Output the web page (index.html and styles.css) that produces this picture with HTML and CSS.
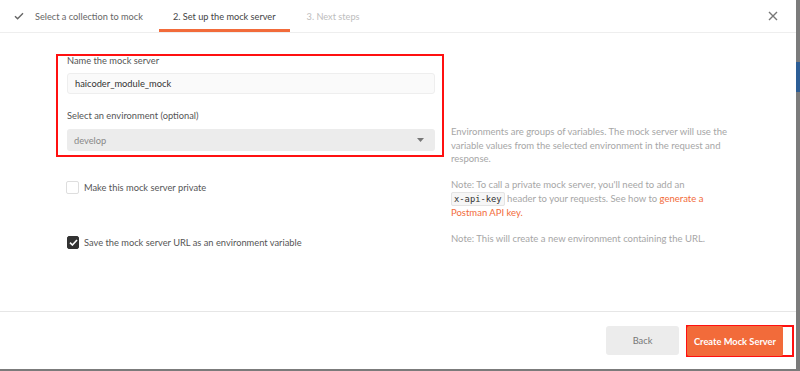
FILE: index.html
```html
<!DOCTYPE html>
<html>
<head>
<meta charset="utf-8">
<link rel="stylesheet" href="styles.css">
</head>
<body>
<div class="screen">
  <div class="modal">
    <header class="tabs">
      <div class="tab tab-done">
        <svg class="tick" width="10" height="8" viewBox="0 0 10 8"><polyline points="1,4.2 3.6,6.8 9,1.2" fill="none" stroke="#666" stroke-width="1.4"/></svg>
        <span>Select a collection to mock</span>
      </div>
      <div class="tab tab-active">2. Set up the mock server</div>
      <div class="tab tab-next">3. Next steps</div>
      <div class="spacer"></div>
      <button class="close" aria-label="Close">
        <svg width="10" height="10" viewBox="0 0 10 10"><path d="M1 1L9 9M9 1L1 9" stroke="#777" stroke-width="1.4" fill="none"/></svg>
      </button>
    </header>
    <main class="content">
      <div class="highlight">
        <label class="label">Name the mock server</label>
        <div class="input">haicoder_module_mock</div>
        <label class="label label-env">Select an environment (optional)</label>
        <div class="select">
          <span>develop</span>
          <svg width="7" height="4" viewBox="0 0 7 4"><path d="M0 0H7L3.5 4Z" fill="#777"/></svg>
        </div>
      </div>
      <p class="help help-env">Environments are groups of variables. The mock server will use the variable values from the selected environment in the request and response.</p>

      <div class="check-row">
        <span class="box"></span>
        <span>Make this mock server private</span>
      </div>
      <p class="help help-private">Note: To call a private mock server, you'll need to add an <code class="code">x-api-key</code> header to your requests. See how to <a class="link">generate a Postman API key.</a></p>

      <div class="check-row check-row-save">
        <span class="box box-on">
          <svg width="9" height="7" viewBox="0 0 9 7"><polyline points="1,3.6 3.4,6 8,1" fill="none" stroke="#fff" stroke-width="1.6"/></svg>
        </span>
        <span>Save the mock server URL as an environment variable</span>
      </div>
      <p class="help help-save">Note: This will create a new environment containing the URL.</p>
    </main>
    <footer class="footer">
      <button class="btn btn-back">Back</button>
      <div class="mark">
        <button class="btn btn-create">Create Mock Server</button>
      </div>
    </footer>
  </div>
  <div class="edge">
    <div class="edge-thumb"></div>
  </div>
</div>
</body>
</html>
```
FILE: styles.css
```css
* { box-sizing: border-box; }
html, body { margin: 0; padding: 0; }
body {
  width: 800px;
  height: 371px;
  background: #7b7b7b;
  font-family: Lato, "Open Sans", sans-serif;
  font-size: 9.3px;
  color: #555;
  overflow: hidden;
}
.screen { display: flex; height: 369px; }
.modal {
  width: 796px;
  height: 369px;
  background: #fff;
  display: flex;
  flex-direction: column;
}
.edge { width: 4px; background: #7b7b7b; }
.edge-thumb { margin-top: 62px; height: 30px; background: #2d5e96; }

.tabs {
  height: 33px;
  flex: none;
  display: flex;
  align-items: stretch;
  border-bottom: 1px solid #eeeeee;
  font-size: 9.2px;
}
.tab {
  display: flex;
  align-items: center;
  padding: 0 14px;
  border-bottom: 3px solid transparent;
  padding-top: 3px;
  white-space: nowrap;
}
.tab-done { padding-left: 14px; padding-right: 16px; color: #666; gap: 11px; }
.tab-active { color: #444; border-bottom-color: #f26b3a; }
.tab-next { color: #bdbdbd; padding-left: 17px; }
.spacer { flex: 1; }
.close {
  border: 0;
  background: none;
  padding: 0;
  width: 38px;
  display: flex;
  align-items: center;
  justify-content: flex-start;
  padding-left: 10px;
  margin-top: -1px;
}

.content {
  flex: 1;
  display: grid;
  grid-template-columns: 388px 282px;
  grid-template-rows: 125px 54px auto;
  column-gap: 7px;
  padding: 21px 0 0 56px;
  align-items: start;
}
.highlight {
  border: 2px solid #ff1010;
  padding: 0 7px 4px 9px;
  display: flex;
  flex-direction: column;
}
.label { display: block; line-height: 12px; color: #555; margin-top: -1px; }
.label-env { margin-top: 16px; }
.input {
  margin-top: 6px;
  height: 21px;
  background: #fafafa;
  border: 1px solid #eeeeee;
  border-radius: 3px;
  padding: 0 7px;
  display: flex;
  align-items: center;
  color: #333;
}
.select {
  margin-top: 7px;
  height: 22px;
  background: #ececec;
  border-radius: 3px;
  padding: 0 11px 0 7px;
  display: flex;
  align-items: center;
  justify-content: space-between;
  color: #888;
}

.help {
  margin: 0;
  color: #a6a6a6;
  line-height: 13.5px;
  font-size: 9.5px;
}
.help-env { margin-top: 71px; }
.help-private { margin-top: -1px; line-height: 14px; }
.help-save { margin-top: -1px; }
.code {
  white-space: nowrap;
  font-family: "DejaVu Sans Mono", "Liberation Mono", monospace;
  font-size: 8.8px;
  color: #333;
  background: #f6f6f6;
  border: 1px solid #e4e4e4;
  border-radius: 2px;
  padding: 1px 2px;
}
.link { color: #f26b3a; }

.check-row {
  display: flex;
  align-items: center;
  gap: 5px;
  padding-left: 10px;
  margin-top: 2px;
  line-height: 13px;
}
.check-row-save { margin-top: 3px; padding-left: 11px; }
.box {
  width: 13px;
  height: 13px;
  border: 1px solid #dedede;
  border-radius: 2px;
  background: #fff;
  display: flex;
  align-items: center;
  justify-content: center;
}
.box-on { background: #333; border-color: #333; width: 12px; height: 13px; }

.footer {
  height: 58px;
  flex: none;
  border-top: 1px solid #e6e6e6;
  display: flex;
  justify-content: flex-end;
  align-items: flex-start;
  gap: 8px;
  padding: 13px 2px 0 0;
}
.btn {
  border: 0;
  font-family: inherit;
  font-size: 9.3px;
  border-radius: 3px;
  height: 29px;
}
.btn-back {
  margin-top: 1px;
  width: 73px;
  background: #ececec;
  color: #777;
}
.mark {
  border: 2px solid #ff1010;
  height: 32px;
  width: 108px;
  margin-left: -1px;
  display: flex;
}
.btn-create {
  margin: -1px 0 -1px -1px;
  width: 96px;
  height: 30px;
  background: #f26b3a;
  color: #fff;
  font-weight: bold;
  border-radius: 2px;
  padding: 0;
}
```
